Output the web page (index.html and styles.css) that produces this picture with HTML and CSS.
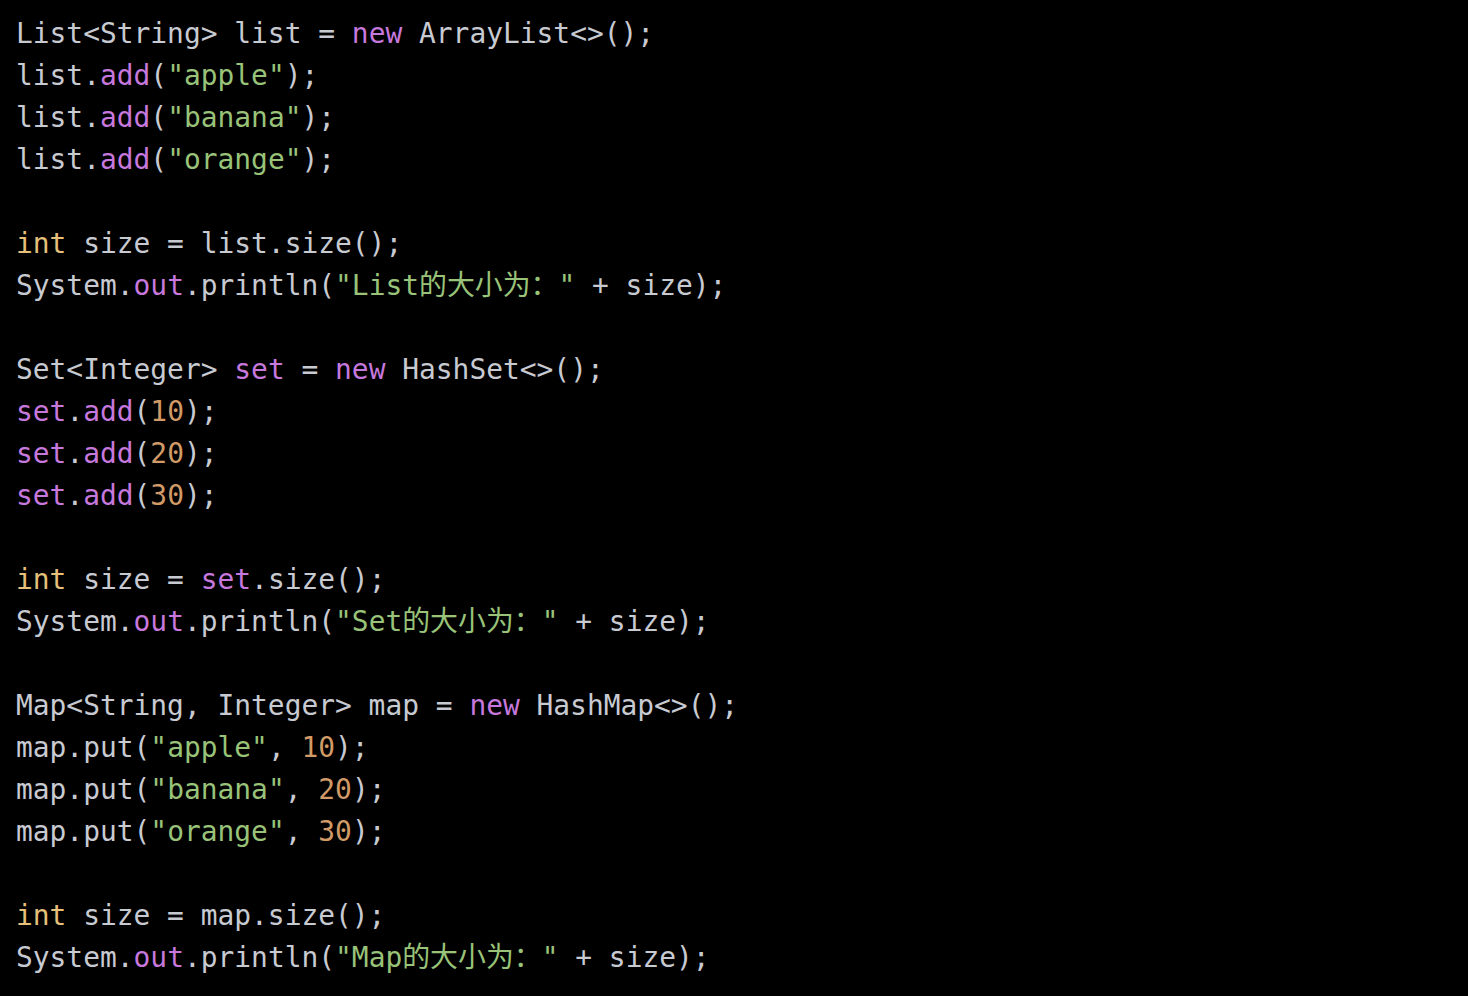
FILE: index.html
```html
<!DOCTYPE html>
<html lang="zh">
<head>
<meta charset="utf-8">
<title>Code</title>
<link rel="stylesheet" href="styles.css">
</head>
<body>
<pre class="code"><code>List&lt;String&gt; list = <span class="kw">new</span> ArrayList&lt;&gt;();
list.<span class="fn">add</span>(<span class="str">"apple"</span>);
list.<span class="fn">add</span>(<span class="str">"banana"</span>);
list.<span class="fn">add</span>(<span class="str">"orange"</span>);

<span class="ty">int</span> size = list.size();
System.<span class="fn">out</span>.println(<span class="str">"List的大小为："</span> + size);

Set&lt;Integer&gt; <span class="kw">set</span> = <span class="kw">new</span> HashSet&lt;&gt;();
<span class="kw">set</span>.<span class="fn">add</span>(<span class="num">10</span>);
<span class="kw">set</span>.<span class="fn">add</span>(<span class="num">20</span>);
<span class="kw">set</span>.<span class="fn">add</span>(<span class="num">30</span>);

<span class="ty">int</span> size = <span class="kw">set</span>.size();
System.<span class="fn">out</span>.println(<span class="str">"Set的大小为："</span> + size);

Map&lt;String, Integer&gt; map = <span class="kw">new</span> HashMap&lt;&gt;();
map.put(<span class="str">"apple"</span>, <span class="num">10</span>);
map.put(<span class="str">"banana"</span>, <span class="num">20</span>);
map.put(<span class="str">"orange"</span>, <span class="num">30</span>);

<span class="ty">int</span> size = map.size();
System.<span class="fn">out</span>.println(<span class="str">"Map的大小为："</span> + size);</code></pre>
</body>
</html>
```
FILE: styles.css
```css
html, body {
  margin: 0;
  padding: 0;
  background: #000;
  height: 100%;
}
.code {
  margin: 0;
  padding: 13px 16px;
  font-family: "DejaVu Sans Mono", "Noto Sans CJK SC", monospace;
  font-size: 27.9px;
  line-height: 42px;
  color: #c8cad2;
  white-space: pre;
}
.code code {
  font-family: inherit;
}
.kw { color: #c678dd; }
.fn { color: #c678dd; }
.str { color: #98c379; }
.num { color: #d19a66; }
.ty { color: #e5c07b; }
```
